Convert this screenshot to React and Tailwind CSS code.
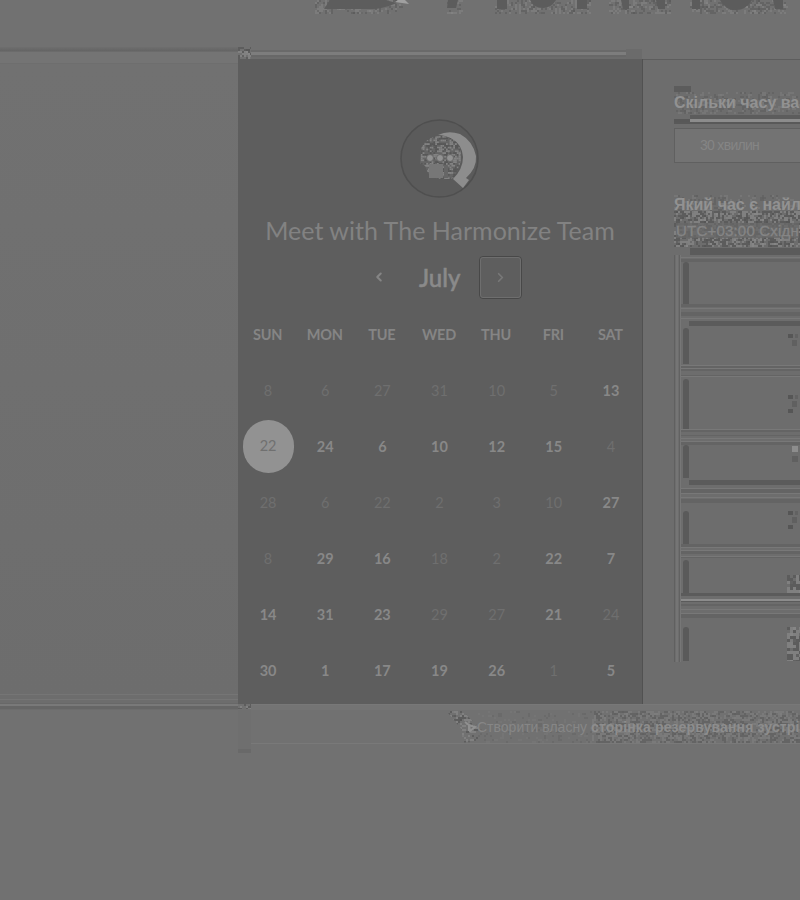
import React from "react";
import { ChevronLeft, ChevronRight } from "lucide-react";

const days = ["SUN", "MON", "TUE", "WED", "THU", "FRI", "SAT"];

// A trailing "*" marks a day that can be booked, "!" the selected one.
const weeks = [
  ["8", "6", "27", "31", "10", "5", "13*"],
  ["22!", "24*", "6*", "10*", "12*", "15*", "4"],
  ["28", "6", "22", "2", "3", "10", "27*"],
  ["8", "29*", "16*", "18", "2", "22*", "7*"],
  ["14*", "31*", "23*", "29", "27", "21*", "24"],
  ["30*", "1*", "17*", "19*", "26*", "1", "5*"],
];

// Small deterministic generator, so the grain is the same on each render.
function speckles(w, h, cell, seed, density) {
  let s = seed;
  const next = () => {
    s = (s * 1103515245 + 12345) % 2147483648;
    return s / 2147483648;
  };
  const marks = [];
  for (let y = 0; y < h; y += cell) {
    for (let x = 0; x < w; x += cell) {
      const r = next();
      if (r < density) {
        marks.push([x, y, next() < 0.5 ? "#555555" : "#898989", next() < 0.3 ? cell * 2 : cell]);
      }
    }
  }
  return marks;
}

function Grain({ w, h, seed = 7, density = 0.5, cell = 2, className = "" }) {
  return (
    <svg width={w} height={h} className={className} aria-hidden="true">
      {speckles(w, h, cell, seed, density).map(([x, y, c, l], i) => (
        <rect key={i} x={x} y={y} width={l} height={cell} fill={c} opacity="0.7" />
      ))}
    </svg>
  );
}

const grainSeeds = [
  [315, 400, 3],
  [447, 461, 5],
  [495, 590, 9],
  [609, 671, 11],
  [690, 785, 17],
];

function Wordmark() {
  return (
    <svg width="800" height="14" viewBox="0 0 800 14" className="block">
      {grainSeeds.map(([a, b, seed]) => (
        <g key={a} transform={`translate(${a} 0)`}>
          {speckles(b - a, 13, 2, seed, 0.48).map(([x, y, c, l], i) => (
            <rect key={i} x={x} y={y} width={l} height="2" fill={c} opacity="0.45" />
          ))}
        </g>
      ))}
      <path d="M330 0H385L397 3Q382 9 372 9H324Z" fill="#5d5d5d" />
      <path d="M398 0H405L409 4L395 2Z" fill="#a0a0a0" />
      <path d="M448 0H458L456 8H447ZM497 0H507V9H497ZM530 0H556Q551 8 543 8Q534 8 530 0ZM577 0H587V9H577ZM621 0H629V9H623ZM656 0H665V9H658ZM692 0H700V9H692ZM720 0H752Q746 10 736 10Q725 10 720 0ZM773 0H783V9H775Z" fill="#5c5c5c" />
    </svg>
  );
}

function Avatar() {
  return (
    <svg width="84" height="84" viewBox="0 0 84 84" className="block">
      <circle cx="41.5" cy="41.5" r="38.5" fill="#5b5b5b" stroke="#4f4f4f" strokeWidth="1.6" />
      <path d="M40 18Q50 13 62 17Q75 24 78 39Q79 51 68 61L71 63L65 71L55 62Q65 52 65 40Q64 27 54 22Q47 18 40 18Z" fill="#8d8d8d" />
      <g clipPath="url(#head)">
        <circle cx="43" cy="41" r="22" fill="#666666" />
        <g transform="translate(21 19)" opacity="0.85">
          {speckles(44, 44, 1.8, 31, 0.55).map(([x, y, c, l], i) => (
            <rect key={i} x={x} y={y} width={l} height="1.8" fill={c} />
          ))}
        </g>
      </g>
      <clipPath id="head">
        <path d="M43 19C55 19 64 28 63 40C63 50 59 54 56 60L52 63C42 61 35 63 30 56L27 49L22 46L23 32C26 23 34 19 43 19Z" />
      </clipPath>
      <rect x="31" y="47" width="14" height="14" fill="#777777" />
      <rect x="46" y="49" width="4" height="12" fill="#666666" />
      {[32, 42, 52].map((x) => (
        <circle key={x} cx={x} cy="41" r="3.5" fill="#929292" stroke="#696969" />
      ))}
    </svg>
  );
}

function Day({ value }) {
  const text = value.replace(/[*!]/, "");
  if (value.endsWith("!")) {
    return (
      <div className="flex h-14 items-center justify-center">
        <span className="mb-0.5 flex h-[53px] w-[51px] items-center justify-center rounded-full bg-[#929292] text-[#707070]">{text}</span>
      </div>
    );
  }
  return (
    <div className={value.endsWith("*") ? "flex h-14 items-center justify-center font-bold text-[#888888]" : "flex h-14 items-center justify-center text-[#6f6f6f]"}>
      {text}
    </div>
  );
}

function Calendar() {
  return (
    <section className="flex h-[645px] w-[405px] shrink-0 flex-col items-center border-r border-[#515151] bg-[#5e5e5e] pt-[58px] font-['Lato',sans-serif]">
      <Avatar />
      <h1 className="mt-[11px] whitespace-nowrap text-[25px] leading-9 tracking-[0.02px] text-[#828282]">Meet with The Harmonize Team</h1>
      <div className="mt-[7px] flex h-11 w-full items-center pl-[134px] text-[#858585]">
        <ChevronLeft size={14} strokeWidth={3.5} />
        <span className="mt-0.5 ml-[33px] w-[42px] whitespace-nowrap text-2xl font-medium text-[#8a8a8a] [-webkit-text-stroke:0.5px_#8a8a8a]">July</span>
        <span className="ml-[18px] flex h-[43px] w-[43px] items-center justify-center rounded border border-[#484848]">
          <span className="flex h-[41px] w-[41px] items-center justify-center rounded-[3px] border border-[#6e6e6e] text-[#787878]">
            <ChevronRight size={15} strokeWidth={2.8} />
          </span>
        </span>
      </div>
      <div className="mt-[23px] mr-0.5 grid w-[400px] grid-cols-7 text-center text-[14.5px] leading-[26px] font-bold tracking-[-0.2px] text-[#858585]">
        {days.map((d) => (
          <span key={d}>{d}</span>
        ))}
      </div>
      <div className="mt-[15px] mr-px grid w-[400px] grid-cols-7 text-[14.5px]">
        {weeks.flat().map((v, i) => (
          <Day key={i} value={v} />
        ))}
      </div>
    </section>
  );
}

// Each slot: height of the body, then the bands under it as [height, tone].
const line = "bg-[#787878]";
const dark = "bg-[#5b5b5b]";
const mid = "bg-[#646464]";
const none = "bg-transparent";
const slots = [
  { body: 42, bands: [[3, mid], [1, none], [1, line], [3, none], [4, mid], [2, none], [1, line], [2, none], [5, dark], [2, none]] },
  { body: 36, bands: [[1, none], [1, line], [2, mid], [1, line], [2, mid], [4, none], [1, mid], [1, line], [2, none]] },
  { body: 50, bands: [[1, line], [2, mid], [3, none], [1, mid], [2, none], [1, line], [2, none], [1, line], [3, mid]] },
  { body: 33, bands: [[2, none], [5, dark], [3, none], [1, line], [4, mid], [1, line], [3, none], [1, line], [1, none], [4, mid], [8, none]] },
  { body: 33, bands: [[3, mid], [1, line], [2, none], [1, line], [3, mid], [2, none], [1, line], [1, mid], [2, none]] },
  { body: 33, bands: [[3, dark], [3, none], [2, "bg-[#8c8c8c]"], [1, dark], [2, none], [2, mid], [3, none], [1, line], [3, none], [1, line], [4, mid], [9, none]] },
  { body: 34, bands: [] },
];

function SlotGlyph({ i }) {
  if (i === 0) return null;
  if (i >= 5) return <Grain w={13} h={i === 6 ? 34 : 18} seed={i * 13} density={0.85} cell={3} className="ml-auto self-end" />;
  if (i === 3) {
    return (
      <span className="mb-4 ml-auto flex w-2 flex-col gap-1">
        <i className="h-1.5 w-1.5 bg-[#8d8d8d]" />
        <i className="h-1.5 w-1.5 bg-[#606060]" />
      </span>
    );
  }
  return (
    <span className={i === 1 ? "mb-3 ml-auto flex w-3 flex-wrap gap-0.5" : i === 4 ? "mb-4 ml-auto flex w-3 flex-wrap gap-0.5" : "ml-auto flex w-3 flex-wrap gap-0.5"}>
      <i className="h-1 w-[5px] bg-[#565656]" />
      <i className="h-1 w-[3px] bg-[#626262]" />
      <i className="ml-1 h-1.5 w-[5px] bg-[#606060]" />
      {i !== 1 && <i className="h-1 w-[5px] bg-[#565656]" />}
    </span>
  );
}

function Slots() {
  return (
    <div className="flex h-[407px] shrink-0">
      <div className="flex w-[7px] shrink-0 justify-between border-l border-[#606060]">
        <i className="ml-px w-0.5 bg-[#757575]" />
        <i className="w-px bg-[#626262]" />
        <i className="w-px bg-[#777777]" />
      </div>
      <div className="flex flex-1 flex-col pt-0.5">
        <div className={`h-px shrink-0 ${line}`} />
        <div className="h-px shrink-0" />
        <div className={`h-[3px] shrink-0 ${mid}`} />
        {slots.map((s, i) => (
          <div key={i} className="flex shrink-0 flex-col">
            <div className="flex items-center overflow-hidden pl-0.5" style={{ height: s.body }}>
              <i className="h-full w-1.5 shrink-0 rounded-t-sm bg-[#5a5a5a]" />
              <SlotGlyph i={i} />
            </div>
            {s.bands.map(([h, tone], j) => (
              <div key={j} className={h === 5 ? `ml-2 ${tone}` : tone} style={{ height: h }} />
            ))}
          </div>
        ))}
      </div>
    </div>
  );
}

function Booking() {
  return (
    <section className="flex min-w-0 flex-1 flex-col overflow-hidden border-t border-[#5d5d5d] bg-[#6d6d6d] pl-[31px] font-['Liberation_Sans',sans-serif]">
      <div className="mt-[26px] h-1.5 w-[17px] shrink-0 bg-[#5c5c5c]" />
      <div className="relative h-[22px] shrink-0">
        <Grain w={126} h={22} seed={23} density={0.3} className="absolute top-0 left-0 opacity-50" />
        <h2 className="relative whitespace-nowrap text-base leading-[22px] font-bold text-[#929292]">Скільки часу ва</h2>
      </div>
      <div className="mt-px flex h-[7px] shrink-0">
        <i className="mt-1 h-[3px] w-4 bg-[#585858]" />
        <span className="flex flex-1 flex-col">
          <i className="h-1 bg-[#5c5c5c]" />
          <i className="h-[3px] bg-[#8c8c8c]" />
        </span>
      </div>
      <div className="h-1 shrink-0 border-t-2 border-[#595959]" />
      <div className="mt-0.5 flex h-[35px] w-[160px] shrink-0 items-center border border-[#606060] bg-[#737373] pl-[25px] text-[14px] tracking-[-0.7px] text-[#858585]">30 хвилин</div>
      <div className="relative mt-8 h-[52px] shrink-0">
        <Grain w={126} h={16} seed={41} density={0.25} className="absolute top-0 left-0 opacity-50" />
        <Grain w={126} h={36} seed={53} density={0.7} className="absolute top-4 left-0" />
        <h2 className="relative whitespace-nowrap text-base leading-5 font-bold text-[#929292]">Який час є найл</h2>
        <p className="relative mt-2 ml-0.5 w-max bg-[#686868]/80 text-[15px] leading-[15px] tracking-[0.2px] text-[#858585] [-webkit-text-stroke:0.3px_#858585]">UTC+03:00 Східн</p>
      </div>
      <div className="mt-px ml-4 h-[7px] shrink-0 bg-[#5b5b5b]" />
      <Slots />
    </section>
  );
}

export default function App() {
  return (
    <div className="flex h-[900px] w-[800px] flex-col overflow-hidden bg-[#717171]">
      <header className="h-[47px] shrink-0">
        <Wordmark />
      </header>
      <main className="flex h-[663px] shrink-0">
        <aside className="flex w-[238px] shrink-0 flex-col">
          <div className="h-1 shrink-0 bg-linear-to-b from-[#6e6e6e] to-[#646464]" />
          <div className="h-3 shrink-0 border-t border-[#6b6b6b] bg-[#747474]" />
          <div className="flex-1 border-t border-[#6e6e6e] bg-linear-to-b from-[#717171] to-[#6d6d6d]" />
          <div className="h-4 shrink-0 border-t border-[#757575] bg-[#6d6d6d] pt-1">
            <div className="h-[5px] border-y border-t-[#757575] border-b-[#686868]" />
            <div className="h-0.5 bg-[#797979]" />
            <div className="h-[3px] bg-[#666666]" />
          </div>
        </aside>
        <div className="flex min-w-0 flex-1 flex-col">
          <div className="flex h-3 shrink-0 items-end">
            <Grain w={13} h={12} seed={61} density={0.55} />
            <div className="flex h-full w-[375px] flex-col pt-[3px]">
              <i className="h-0.5 bg-[#6a6a6a]" />
              <i className="h-[3px] bg-[#7d7d7d]" />
              <i className="h-0.5 bg-[#686868]" />
              <i className="h-0.5 bg-[#6c6c6c]" />
            </div>
            <div className="h-[10px] w-4 bg-[#6b6b6b]" />
          </div>
          <div className="flex h-[645px] shrink-0">
            <Calendar />
            <Booking />
          </div>
          <div className="flex h-1.5">
            <Grain w={13} h={5} seed={71} density={0.35} />
            <div className="flex-1 border-t border-[#787878] bg-[#747474]" />
          </div>
        </div>
      </main>
      <footer className="flex h-[43px] shrink-0 pl-[238px]">
        <div className="w-[13px] border-b-4 border-[#696969] bg-[#6f6f6f]" />
        <div className="flex h-[34px] flex-1 items-center border-b border-[#797979] bg-[#717171] pl-[195px]">
          <div className="relative flex h-8 w-[354px] shrink-0 items-center">
            <Grain w={32} h={32} seed={83} density={0.45} className="absolute top-0 left-0 [clip-path:polygon(0_0,50%_0,100%_50%,100%_100%,50%_100%,50%_60%)]" />
            <Grain w={208} h={32} seed={97} density={0.6} className="absolute top-0 left-[146px] opacity-60" />
            <Grain w={114} h={32} seed={19} density={0.15} className="absolute top-0 left-8 opacity-30" />
            <svg width="14" height="14" viewBox="0 0 14 14" className="relative ml-[17px] shrink-0">
              <path d="M2 2l4 3v6M6 5l6 2-5 4z" fill="none" stroke="#909090" strokeWidth="2" />
            </svg>
            <p className="relative mt-0.5 whitespace-nowrap font-['Liberation_Sans',sans-serif] text-[14px] text-[#868686]">
              Створити власну <span className="font-bold tracking-[0.15px] text-[#8d8d8d]">сторінка резервування зустрі</span>
            </p>
          </div>
        </div>
      </footer>
    </div>
  );
}
